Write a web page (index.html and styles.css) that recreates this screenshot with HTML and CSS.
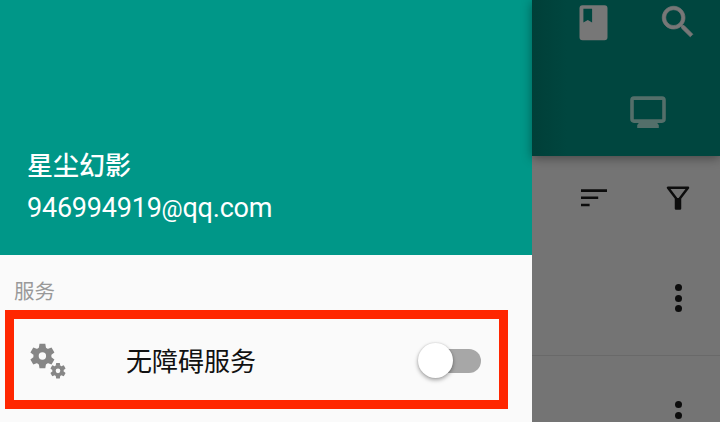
FILE: index.html
```html
<!DOCTYPE html>
<html lang="zh-CN">
<head>
<meta charset="utf-8">
<title>服务</title>
<link rel="stylesheet" href="styles.css">
</head>
<body>
<div class="screen">
  <aside class="drawer">
    <header class="profile">
      <div class="name">星尘幻影</div>
      <div class="email">946994919<span class="at">@</span>qq.com</div>
    </header>
    <h2 class="section">服务</h2>
    <div class="setting">
      <svg class="gears" width="38" height="38" viewBox="0 0 38 38">
        <defs>
          <g id="gear">
            <circle r="6.4" fill="none" stroke="#868686" stroke-width="5.4"/>
            <g id="teeth">
              <path id="tooth" d="M-3.6-8l.7-4.2h5.8l.7 4.2zM-3.6 8l.7 4.2h5.8l.7-4.2z"/>
              <use href="#tooth" transform="rotate(60)"/>
              <use href="#tooth" transform="rotate(120)"/>
            </g>
          </g>
        </defs>
        <use href="#gear" transform="translate(13.4 14)"/>
        <use href="#gear" transform="translate(29 28.8) scale(.63)"/>
      </svg>
      <span class="label">无障碍服务</span>
      <span class="switch"><span class="thumb"></span></span>
    </div>
  </aside>
  <main class="page">
    <div class="appbar">
      <div class="actions">
        <svg width="29" height="36" viewBox="0 0 29 36"><path fill="#777" fill-rule="evenodd" d="M3.5.2h22a3 3 0 0 1 3 3v29a3 3 0 0 1-3 3h-22a3 3 0 0 1-3-3v-29a3 3 0 0 1 3-3zM4.4 3.8v13.8l4.4-2.6 4.3 2.6V3.8z"/></svg>
        <svg class="search" width="42" height="42" viewBox="0 0 24 24"><path fill="#777" stroke="#777" stroke-width=".4" d="M15.5 14h-.79l-.28-.27C15.41 12.59 16 11.11 16 9.5 16 5.91 13.09 3 9.5 3S3 5.91 3 9.5 5.91 16 9.5 16c1.61 0 3.09-.59 4.23-1.57l.27.28v.79l5 4.99L20.49 19l-4.99-5zm-6 0C7.01 14 5 11.99 5 9.5S7.01 5 9.5 5 14 7.01 14 9.5 11.99 14 9.5 14z"/></svg>
      </div>
      <svg class="monitor" width="36" height="33" viewBox="0 0 36 33"><rect x="2" y="2.1" width="32" height="23" rx="2" fill="none" stroke="#546f6a" stroke-width="3.6"/><path fill="#546f6a" d="M8.5 26h19v1.5l1.3 1.5v3H7.2v-3l1.3-1.5z"/></svg>
    </div>
    <div class="tools">
      <svg width="27" height="20" viewBox="0 0 27 20"><path fill="#0d0d0d" d="M1 1.2h26v2.7H1zM1 8.6h17.2v2.5H1zM1 15.8h8.6v2.5H1z"/></svg>
      <svg width="24" height="24" viewBox="0 0 24 24"><path fill="none" stroke="#0d0d0d" stroke-width="2.5" stroke-linejoin="round" d="M2 1.8h20L14 12.2v10.2h-4V12.2z"/><path fill="#0d0d0d" d="M10 12h4v10h-4z"/></svg>
    </div>
    <div class="row"><span class="more"><i></i><i></i><i></i></span></div>
    <div class="row"><span class="more"><i></i><i></i><i></i></span></div>
  </main>
</div>
</body>
</html>
```

FILE: styles.css
```css
* { box-sizing: border-box; }
body { margin: 0; font-family: Roboto, "Noto Sans CJK SC", sans-serif; }
svg { display: block; flex: none; }
.screen { display: flex; width: 720px; height: 422px; overflow: hidden; }

.drawer { width: 532px; flex: none; background: #fafafa; }
.profile { height: 255px; padding: 146px 0 0 27px; background: #009788; color: #fff; }
.name { font-size: 26px; line-height: 40px; font-weight: 500; }
.email { font-size: 27px; line-height: 44px; letter-spacing: -.22px; white-space: nowrap; }
.at { font-size: 23.5px; line-height: 1; }
.section { margin: 0; height: 55px; padding: 19px 0 0 14px; font-size: 20.5px; line-height: 36px; font-weight: 400; color: #999; }
.setting { display: flex; align-items: center; width: 503px; height: 99px; margin-left: 5px; padding: 2px 18px 0 15px; border: 9px solid #ff2600; }
.gears { fill: #868686; }
.label { margin-left: 59px; padding-top: 2px; font-size: 26px; line-height: 40px; color: #111; }
.switch { width: 61px; height: 24px; margin-left: auto; display: flex; align-items: center; background: linear-gradient(#a7a7a7, #a7a7a7) right / 44px 24px no-repeat; border-radius: 12px; }
.thumb { width: 35px; height: 35px; flex: none; margin-left: -2px; border-radius: 50%; background: #fff; box-shadow: 0 2px 4px rgba(0, 0, 0, .35), 0 0 2px rgba(0, 0, 0, .15); }

.page { flex: 1; background: #747474; }
.appbar { height: 156px; padding-right: 21px; background: linear-gradient(90deg, #003f38, #00463f 35px); box-shadow: 0 2px 10px rgba(0, 0, 0, .4); }
.actions { display: flex; align-items: flex-start; justify-content: space-between; height: 95px; padding: 5px 0 0 47px; }
.search { margin-top: -4px; }
.monitor { margin: 1px 0 0 98px; }
.tools { display: flex; align-items: center; justify-content: space-between; height: 83px; padding: 0 30px 0 48px; }
.row { display: flex; align-items: center; justify-content: flex-end; height: 117px; padding: 2px 38.5px 0 0; border-bottom: 1px solid #696969; }
.more { display: flex; flex-direction: column; gap: 3.5px; }
.more i { width: 7px; height: 7px; border-radius: 50%; background: #0d0d0d; }
```
